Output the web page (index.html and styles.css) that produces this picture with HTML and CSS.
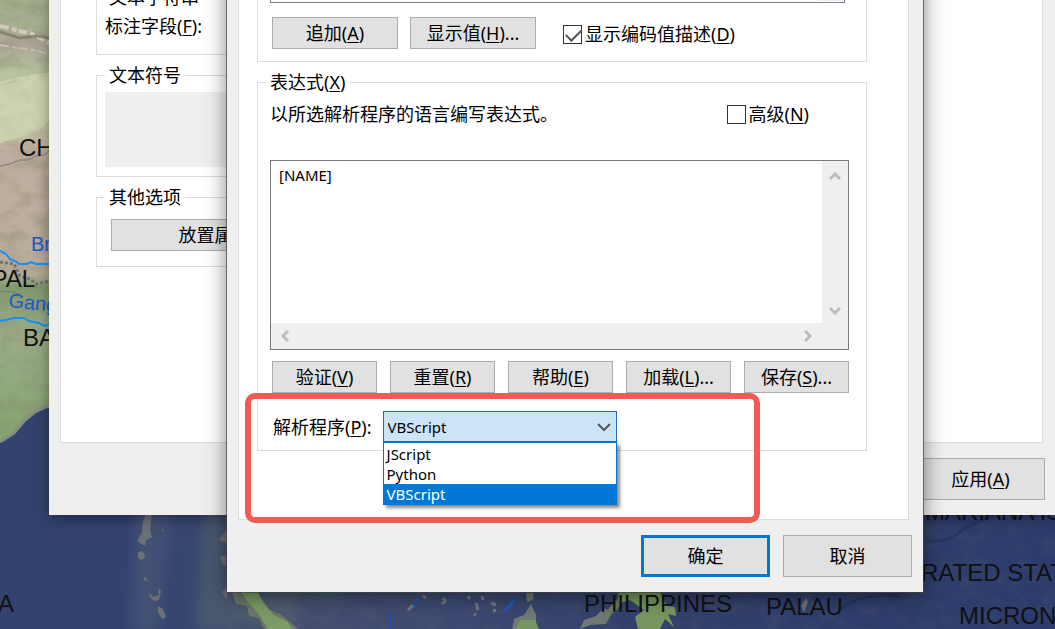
FILE: index.html
```html
<!DOCTYPE html>
<html lang="zh-CN">
<head>
  <meta charset="UTF-8">
  <meta name="viewport" content="width=device-width, initial-scale=1.0">
  <title>标注表达式</title>
  <link rel="stylesheet" href="styles.css">
</head>
<body>
  <main class="desktop">
    <!-- Mapa de fondo -->
    <svg class="map" viewBox="0 0 1055 629" preserveAspectRatio="xMinYMin slice" role="img" aria-label="地图">
      <defs>
        <linearGradient id="land" x1="0" y1="0" x2="0" y2="1">
          <stop offset="0" stop-color="#a3b48f"/>
          <stop offset="0.07" stop-color="#a9b093"/>
          <stop offset="0.1" stop-color="#aba596"/>
          <stop offset="0.16" stop-color="#b7c29f"/>
          <stop offset="0.3" stop-color="#c5c5a6"/>
          <stop offset="0.34" stop-color="#bfaea0"/>
          <stop offset="0.46" stop-color="#bfae9f"/>
          <stop offset="0.58" stop-color="#b9ae9e"/>
          <stop offset="0.62" stop-color="#b3aa98"/>
          <stop offset="0.65" stop-color="#7f9a6c"/>
          <stop offset="0.75" stop-color="#9aac88"/>
          <stop offset="1" stop-color="#84a570"/>
        </linearGradient>
        <linearGradient id="sea" x1="0" y1="0" x2="1" y2="0">
          <stop offset="0" stop-color="#33426e"/>
          <stop offset="0.12" stop-color="#33436f"/>
          <stop offset="0.14" stop-color="#3c4b72"/>
          <stop offset="0.16" stop-color="#34446f"/>
          <stop offset="0.19" stop-color="#37486f"/>
          <stop offset="0.3" stop-color="#444d70"/>
          <stop offset="0.45" stop-color="#3c4872"/>
          <stop offset="0.6" stop-color="#33406c"/>
          <stop offset="1" stop-color="#2b3c6c"/>
        </linearGradient>
        <filter id="relief" x="0" y="0" width="100%" height="100%">
          <feTurbulence type="fractalNoise" baseFrequency="0.05 0.07" numOctaves="4" seed="8"/>
          <feColorMatrix values="0 0 0 0 0.25  0 0 0 0 0.24  0 0 0 0 0.15  1.6 0 0 0 -0.65"/>
          <feComposite in2="SourceGraphic" operator="in"/>
        </filter>
        <filter id="soft" x="-50%" y="-50%" width="200%" height="200%"><feGaussianBlur stdDeviation="6"/></filter>
      </defs>
      <rect width="1055" height="629" fill="url(#sea)"/>
      <rect x="228" width="827" height="629" filter="url(#relief)" opacity="0.15"/>
      <path d="M0 0H60V404L46 407L35 412L25 420L14 433L0 442Z" fill="url(#land)"/>
      <path d="M0 82L20 77L50 72V120L38 131L0 143Z" fill="#cdd3b0"/>
      <path d="M0 0H60V404L46 407L35 412L25 420L14 433L0 442Z" filter="url(#relief)" opacity="0.6"/>
      <path d="M0 86L20 81L50 76V118L36 129L0 140Z" fill="#cdd3b0" opacity="0.6"/>
      <path d="M60 404L46 407L35 412L25 420L14 433L0 442" fill="none" stroke="#858d84" stroke-width="3"/>
      <path d="M0 26L16 30L32 34L50 43" fill="none" stroke="#d3cabd" stroke-width="4" stroke-dasharray="9 3 5 2"/>
      <path d="M0 32L20 38L36 36L50 38" fill="none" stroke="#6f705b" stroke-width="3" opacity="0.6"/>
      <path d="M0 45L18 48L33 50L50 54" fill="none" stroke="#c9bdae" stroke-width="2" stroke-dasharray="9 3 5 2"/>
      <path d="M0 166L10 164L20 160L28 160L36 156L44 155L50 150M0 291L12 292L20 294" fill="none" stroke="#77777a" stroke-width="1"/>
      <path d="M0 262L14 264L20 276L30 279L36 284L50 281" fill="none" stroke="#77706b" stroke-width="3" stroke-dasharray="3 2"/>
      <path d="M0 251L6 254L10 259L17 262L19 264L27 264L31 262L36 264H50M0 321L6 320L14 318H24L29 321L34 322L39 323L45 326L50 324" fill="none" stroke="#1b8fee" stroke-width="2"/>

      <path d="M138 510L128 629H160L176 510Z" fill="#56627a" opacity="0.3" filter="url(#soft)"/>
      <path d="M205 510L196 629H300V590H228V510Z" fill="#5f6c70" opacity="0.45" filter="url(#soft)"/>
      <g fill="#6e7174">
        <path d="M146 512H152L150 530L152 537L146 540L145 546L140 543L137 541L142 533L143 522Z"/>
        <path d="M138 552L142 551L145 554L144 559L140 560L138 557ZM144 577L147 578V581L144 580ZM149 592L153 597L159 595L158 588L161 591L159 600L154 601L150 597ZM158 606L163 609L166 617L162 619L158 612ZM161 529L164 530L163 532Z"/>
        <path d="M223 534L227 530V543L219 540ZM220 557L226 555V566L222 563ZM222 592L227 587V600Z"/>
      </g>
      <path d="M231 589L236 604L247 606L249 616L259 618L264 629H298L290 622L280 614L270 610L262 599L256 591Z" fill="#6e766c"/>
      <path d="M240 590H257L263 603L274 615L288 622L292 629H268L258 613L248 602Z" fill="#7d9b65"/>
      <ellipse cx="330" cy="594" rx="16" ry="5" fill="#426575" filter="url(#soft)"/>
      <path d="M390 612V629" stroke="#1b4fb8" stroke-width="2"/>
      <path d="M416 600L419 599M413 607L416 606M505 611L514 600" stroke="#1b5ac4" stroke-width="3"/>
      <path d="M408 610L413 605M423 596L426 598M443 598L445 601L442 604M468 596L470 599M476 603L478 610M482 596L483 600M491 603L496 605M494 609L495 612M474 614L476 615" stroke="#74787e" stroke-width="3" fill="none"/>
      <path d="M526 593H534L533 600L527 602ZM531 604L536 615L536 629H512L514 619L524 615ZM580 629L584 620L596 616L604 608L612 613L606 624L590 625Z" fill="#707972"/>
      <path d="M520 620H535L539 629H515ZM619 592H660L667 606L675 607L676 616L668 614L674 627L665 619L660 629H638L635 617L644 610L630 600L617 604Z" fill="#78965f"/>
      <path d="M604 614L616 600L622 603L614 613Z" fill="#6c7a68"/>
      <path d="M801 606L806 598L808 602L804 612Z" fill="#70756b"/>
      <path d="M926 541Q950 543 962 530Q980 520 996 514M840 610Q860 592 900 596" fill="none" stroke="#22315a" stroke-width="3" opacity="0.6"/>
      <g class="place">
        <text x="19" y="156">CHINA</text>
        <text x="35" y="287" text-anchor="end">NEPAL</text>
        <text x="23" y="346">BANGLADESH</text>
        <text x="14" y="612" text-anchor="end">SRI LANKA</text>
        <text x="584" y="612">PHILIPPINES</text>
        <text x="766" y="615">PALAU</text>
        <text x="925" y="520">MARIANA IS</text>
        <text x="857" y="581">FEDERATED STATES</text>
        <text x="959" y="624">MICRONESIA</text>
      </g>
      <g class="river">
        <text x="31" y="251">Brahmaputra</text>
        <text x="8" y="307" transform="rotate(6 8 307)">Ganges</text>
      </g>
    </svg>

    <!-- Ventana de propiedades -->
    <section class="window window-props" aria-label="图层属性">
      <div class="panel panel-props">
        <fieldset class="group group-field">
          <legend>文本字符串</legend>
          <p class="text">标注字段(<u>F</u>):</p>
        </fieldset>
        <fieldset class="group group-symbol">
          <legend>文本符号</legend>
          <div class="preview"></div>
        </fieldset>
        <fieldset class="group group-other">
          <legend>其他选项</legend>
          <button class="btn btn-place" type="button">放置属性(<u>N</u>)...</button>
        </fieldset>
      </div>
      <div class="footer">
        <button class="btn btn-dialog" type="button">应用(<u>A</u>)</button>
      </div>
    </section>

    <!-- Ventana de la expresión -->
    <section class="window window-expr" aria-label="标注表达式">
      <div class="panel panel-expr">
        <fieldset class="group group-fields">
          <div class="field-list">
            <span>个人地图</span>
            <div class="field-scroll"></div>
          </div>
          <div class="row">
            <button class="btn btn-wide" type="button">追加(<u>A</u>)</button>
            <button class="btn btn-wide" type="button">显示值(<u>H</u>)...</button>
            <label class="check check-coded"><input type="checkbox" checked><span>显示编码值描述(<u>D</u>)</span></label>
          </div>
        </fieldset>

        <fieldset class="group group-expr">
          <legend>表达式(<u>X</u>)</legend>
          <div class="intro">
            <p class="text">以所选解析程序的语言编写表达式。</p>
            <label class="check"><input type="checkbox"><span>高级(<u>N</u>)</span></label>
          </div>
          <div class="editor">
            <textarea aria-label="表达式" spellcheck="false">[NAME]</textarea>
            <div class="scroll scroll-y">
              <svg width="12" height="8" viewBox="0 0 12 8"><path d="M1 7L6 2L11 7"/></svg>
              <svg width="12" height="8" viewBox="0 0 12 8"><path d="M1 1L6 6L11 1"/></svg>
            </div>
            <div class="scroll scroll-x">
              <svg width="8" height="12" viewBox="0 0 8 12"><path d="M7 1L2 6L7 11"/></svg>
              <svg width="8" height="12" viewBox="0 0 8 12"><path d="M1 1L6 6L1 11"/></svg>
            </div>
          </div>
          <div class="actions">
            <button class="btn" type="button">验证(<u>V</u>)</button>
            <button class="btn" type="button">重置(<u>R</u>)</button>
            <button class="btn" type="button">帮助(<u>E</u>)</button>
            <button class="btn" type="button">加载(<u>L</u>)...</button>
            <button class="btn" type="button">保存(<u>S</u>)...</button>
          </div>
          <div class="parser">
            <label for="parser">解析程序(<u>P</u>):</label>
            <div class="combo">
              <select id="parser">
                <option>JScript</option>
                <option>Python</option>
                <option selected>VBScript</option>
              </select>
              <svg class="combo-arrow" width="14" height="9" viewBox="0 0 14 9"><path d="M1 1L7 7L13 1"/></svg>
              <ul class="options">
                <li>JScript</li>
                <li>Python</li>
                <li class="selected">VBScript</li>
              </ul>
            </div>
          </div>
        </fieldset>
      </div>
      <div class="footer">
        <button class="btn btn-dialog btn-default" type="button">确定</button>
        <button class="btn btn-dialog" type="button">取消</button>
      </div>
      <div class="highlight"></div>
    </section>
  </main>
</body>
</html>
```
FILE: styles.css
```css
* {
  box-sizing: border-box;
}
body {
  margin: 0;
  font-family: "Noto Sans", "Noto Sans CJK SC", sans-serif;
  font-size: 18px;
  line-height: 20px;
  color: #000;
}
u {
  text-underline-offset: 2px;
  text-decoration-thickness: 1px;
}
.desktop {
  position: relative;
  height: 100vh;
  overflow: hidden;
}

/* Mapa */
.map {
  display: block;
  width: 100%;
  height: 100%;
}
.place {
  font-family: "Liberation Sans", Arial, sans-serif;
  font-size: 24px;
  fill: #111;
}
.river {
  font-family: "Liberation Sans", Arial, sans-serif;
  font-size: 20px;
  fill: #1c58d0;
}

/* Ventanas */
.window {
  position: absolute;
  background-color: #efefef;
}
.window-props {
  top: -13px;
  left: 49px;
  right: 0;
  padding: 0 10px 15px 11px;
  box-shadow: 0 3px 14px rgba(0, 0, 0, 0.4);
}
.window-expr {
  top: -60px;
  left: 227px;
  width: 696px;
  padding: 0 11px 15px;
  box-shadow: 0 0 0 1px rgba(70, 70, 70, 0.7), 0 4px 20px rgba(0, 0, 0, 0.5);
}
.panel {
  background-color: #fff;
  border: 1px solid #dcdcdc;
  border-top: 0;
}
.panel-props {
  margin-right: 2px;
  padding: 0 35px 175px;
}
.panel-expr {
  margin-right: 3px;
  padding: 20px 41px 68px 18px;
}
.footer {
  display: flex;
  justify-content: flex-end;
  gap: 13px;
  padding-top: 15px;
}

/* Grupos */
.group {
  min-width: 0;
  margin: 0;
  padding: 0;
  border: 1px solid #dcdcdc;
}
.group legend {
  padding: 0 4px;
  height: 20px;
}
.text {
  margin: 0;
}
.panel-props .group {
  max-width: 640px;
}
.group-field {
  padding: 9px 8px 18px;
}
.group-symbol {
  margin-top: 10px;
  padding: 7px 8px 9px;
}
.preview {
  height: 75px;
  background-color: #efefef;
}
.group-other {
  margin-top: 10px;
  padding: 12px 8px 15px;
}
.group-fields {
  padding: 20px 12px 12px;
}
.field-list {
  display: flex;
  justify-content: space-between;
  height: 22px;
  margin-right: 9px;
  padding-left: 8px;
  overflow: hidden;
  border: 1px solid #7a8490;
  font-size: 15px;
}
.field-scroll {
  width: 26px;
  margin-bottom: 1px;
  background-color: #efefef;
}
.row {
  display: flex;
  align-items: center;
  gap: 12px;
  margin-top: 14px;
  padding-left: 2px;
}
.group-expr {
  margin-top: 10px;
  padding: 12px 17px 8px 12px;
}
.group-expr legend {
  margin-left: -4px;
}
.intro {
  display: flex;
  justify-content: space-between;
  padding-right: 40px;
}

/* Controles */
.btn {
  width: 105px;
  height: 32px;
  padding: 0;
  border: 1px solid #adadad;
  background-color: #e1e1e1;
  font: inherit;
  color: inherit;
}
.btn-wide {
  width: 126px;
}
.btn-place {
  width: 246px;
  margin-left: 6px;
}
.btn-dialog {
  width: 129px;
  height: 42px;
}
.btn-default {
  border: 3px solid #0078d7;
}
.check {
  display: flex;
  align-items: center;
  gap: 3px;
}
.check-coded {
  margin: 2px 0 0 15px;
}
.check input {
  appearance: none;
  width: 19px;
  height: 19px;
  margin: 0;
  border: 1px solid #333;
  background-color: #fff;
}
.check input:checked::after {
  content: "";
  display: block;
  width: 13px;
  height: 7px;
  margin: 3px 2px;
  border: solid #555;
  border-width: 0 0 2px 2px;
  transform: rotate(-45deg);
}

/* Editor de la expresión */
.editor {
  display: grid;
  grid-template-columns: 1fr 26px;
  grid-template-rows: 162px 26px;
  margin-top: 36px;
  border: 1px solid #7a7a7a;
}
.editor textarea {
  padding: 4px 8px;
  border: 0;
  outline: 0;
  resize: none;
  font: inherit;
  font-size: 15px;
  line-height: 20px;
  color: inherit;
}
.scroll {
  display: flex;
  justify-content: space-between;
  align-items: center;
  background-color: #efefef;
}
.scroll path {
  fill: none;
  stroke: #bdbdbd;
  stroke-width: 3;
}
.scroll-y {
  flex-direction: column;
  padding: 11px 0 8px;
}
.scroll-x {
  grid-column: 1 / 3;
  padding: 0 36px 0 10px;
}
.actions {
  display: flex;
  justify-content: space-between;
  margin-top: 11px;
  padding-left: 2px;
}

/* Lista de analizadores */
.parser {
  display: flex;
  align-items: center;
  gap: 11px;
  margin-top: 18px;
  padding-left: 3px;
}
.combo {
  position: relative;
  width: 234px;
}
.combo select {
  display: block;
  appearance: none;
  width: 100%;
  height: 31px;
  padding: 0 4px;
  border: 1px solid #1f6fb5;
  border-radius: 0;
  outline: 0;
  background-color: #cce4f7;
  font: inherit;
  font-size: 15px;
  color: inherit;
}
.combo-arrow {
  position: absolute;
  top: 12px;
  right: 6px;
  fill: none;
  stroke: #555;
  stroke-width: 2;
}
.options {
  position: absolute;
  top: 31px;
  left: 0;
  right: 0;
  z-index: 1;
  margin: 0;
  padding: 1px 0 0;
  border: 1px solid #0078d7;
  background-color: #fff;
  box-shadow: 3px 3px 3px rgba(0, 0, 0, 0.45);
  list-style: none;
  font-size: 15px;
}
.options li {
  padding: 0 3px;
}
.options .selected {
  background-color: #0078d7;
  color: #fff;
}
.highlight {
  position: absolute;
  right: 163px;
  bottom: 69px;
  left: 18px;
  height: 130px;
  border: 6px solid #f15b56;
  border-radius: 10px;
  pointer-events: none;
}
```
